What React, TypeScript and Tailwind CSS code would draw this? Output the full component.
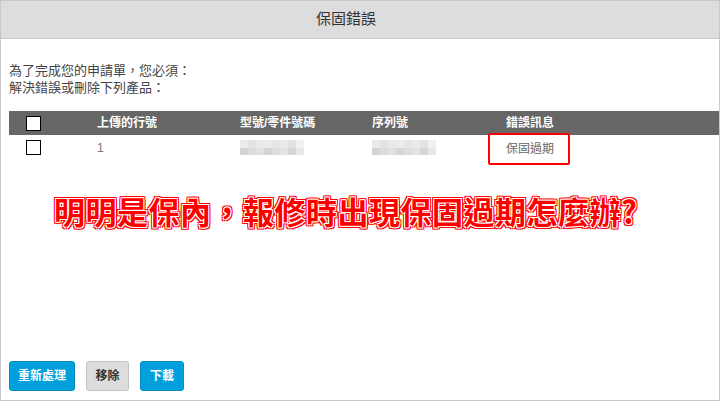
import React from "react";

const font = "font-['Liberation_Sans','Noto_Sans_CJK_TC',sans-serif]";

function Checkbox() {
  return <div className="ml-[17px] h-[15px] w-[15px] border border-black bg-white" />;
}

function Blur() {
  return (
    <div className="grid h-[15px] w-[64px] grid-cols-8 grid-rows-2">
      {["#ebebeb", "#e4e4e4", "#e9e9e9", "#ececec", "#e6e6e6", "#eaeaea", "#e2e2e2", "#f1f1f1"].map((c, i) => (
        <div key={"a" + i} style={{ background: c }} />
      ))}
      {["#d3d3d3", "#dcdcdc", "#e1e1e1", "#d5d5d5", "#dedede", "#e3e3e3", "#d6d6d6", "#e8e8e8"].map((c, i) => (
        <div key={"b" + i} style={{ background: c }} />
      ))}
    </div>
  );
}

export default function App() {
  return (
    <div className={`${font} flex h-[401px] w-[720px] flex-col overflow-hidden border border-[#c8c8c8] bg-white text-[#333]`}>
      {/* header */}
      <div className="flex h-[38px] shrink-0 items-center justify-center border-b border-[#c8c8c8] bg-[#dddddd] pr-[28px] text-[15px]">
        保固錯誤
      </div>

      <div className="flex flex-1 flex-col pl-[8px]">
        <div className="mt-[23px] text-[13px] leading-[17px] text-[#444]">
          <p>為了完成您的申請單，您必須：</p>
          <p>解決錯誤或刪除下列產品：</p>
        </div>

        {/* table */}
        <div className="mt-[15px]">
          <div className="grid h-[24px] grid-cols-[88px_143px_132px_134px_1fr] items-center bg-[#666666] text-[12px] font-bold text-white">
            <Checkbox />
            <span>上傳的行號</span>
            <span>型號/零件號碼</span>
            <span>序列號</span>
            <span>錯誤訊息</span>
          </div>
          <div className="relative grid h-[27px] grid-cols-[88px_143px_132px_134px_1fr] items-start pt-[4px] text-[12px] leading-[16px] text-[#777]">
            <div className="pt-[1px]">
              <Checkbox />
            </div>
            <span className="pt-[1px]">1</span>
            <div className="pt-[1px]">
              <Blur />
            </div>
            <div className="pt-[1px]">
              <Blur />
            </div>
            <span className="pt-[2px] text-[#666]">保固過期</span>
            <div className="absolute left-[479px] top-[-2px] h-[32px] w-[82px] rounded-[2px] border-2 border-[#ff0000]" />
          </div>
        </div>

        {/* annotation headline */}
        <div className="mt-[32px] pl-[45px] font-['Noto_Sans_CJK_TC',sans-serif] text-[31px] font-bold leading-[34px] tracking-[0.5px] text-[#ff0000] [text-shadow:0_0_1px_#fff,1px_1px_0_#fff,-1px_-1px_0_#fff,1px_-1px_0_#fff,-1px_1px_0_#fff,2px_2px_0_#f00,-2px_-2px_0_#f00,2px_-2px_0_#f00,-2px_2px_0_#f00,0_2px_0_#f00,0_-2px_0_#f00,2px_0_0_#f00,-2px_0_0_#f00]">
          明明是保內，報修時出現保固過期怎麼辦?
        </div>

        {/* buttons */}
        <div className="mt-auto mb-[9px] flex gap-[11px] text-[12px] font-bold">
          <button className="h-[30px] w-[66px] rounded-[3px] border border-[#0a8fc4] bg-[#00a0dc] text-white">重新處理</button>
          <button className="h-[30px] w-[43px] rounded-[3px] border border-[#c4c4c4] bg-[#dddddd] text-[#333]">移除</button>
          <button className="h-[30px] w-[44px] rounded-[3px] border border-[#0a8fc4] bg-[#00a0dc] text-white">下載</button>
        </div>
      </div>
    </div>
  );
}
